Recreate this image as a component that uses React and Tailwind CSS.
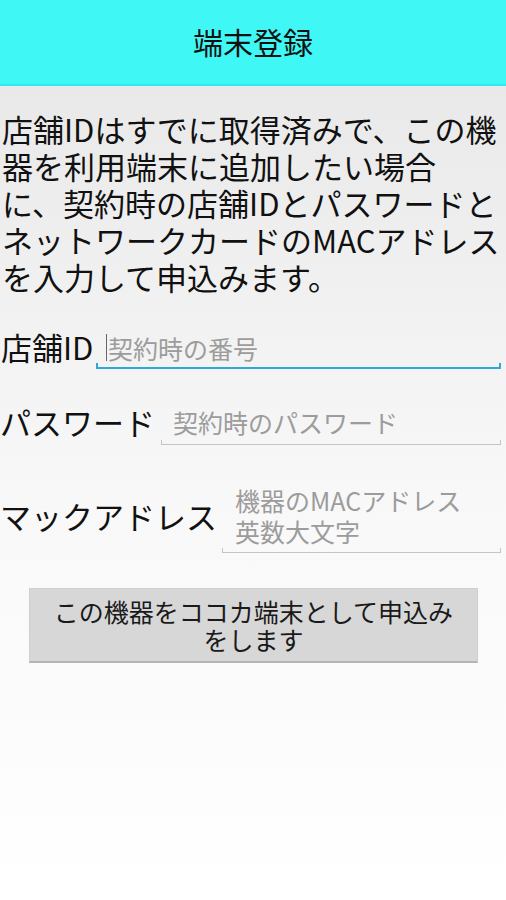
import React from "react";

const font = "font-['Noto_Sans_CJK_JP','Noto_Sans_CJK_SC',sans-serif]";

// Holo style underline with small end ticks
const Underline = ({ active }) => (
  <div
    className={
      active
        ? "h-[6px] border-x-2 border-b-2 border-[#33a6d8]"
        : "h-[5px] border-x border-b border-[#c4c4c4]"
    }
  />
);

const App = () => {
  return (
    <div className={`w-[506px] h-[900px] flex flex-col ${font} text-[#111]`}>
      <header className="h-[86px] shrink-0 flex items-center justify-center bg-[#3ff8f5] border-b-2 border-[#30e8ee]">
        <h1 className="text-[30px] leading-none pb-[2px]">端末登録</h1>
      </header>

      <main className="flex-1 flex flex-col bg-linear-to-b from-[#e9e9e9] via-[#f8f8f8] to-white">
        <p className="pt-[24px] pl-[2px] text-[31px] leading-[37px] whitespace-nowrap">
          店舗IDはすでに取得済みで、この機
          <br />
          器を利用端末に追加したい場合
          <br />
          に、契約時の店舗IDとパスワードと
          <br />
          ネットワークカードのMACアドレス
          <br />
          を入力して申込みます。
        </p>

        {/* 店舗ID */}
        <div className="flex items-start mt-[37px] pr-[5px]">
          <label className="w-[96px] shrink-0 pl-[1px] text-[31px] leading-[30px] whitespace-nowrap">
            店舗ID
          </label>
          <div className="flex-1">
            <div className="flex items-center h-[31px] pl-[10px] text-[25px] leading-[30px] text-[#9c9c9c]">
              <span className="w-px h-[27px] bg-[#666] mr-[1px]" />
              契約時の番号
            </div>
            <Underline active />
          </div>
        </div>

        {/* パスワード */}
        <div className="flex items-start mt-[38px] pr-[5px]">
          <label className="w-[161px] shrink-0 text-[31px] leading-[30px] whitespace-nowrap">
            パスワード
          </label>
          <div className="flex-1">
            <div className="h-[33px] pl-[12px] text-[25px] leading-[30px] text-[#9c9c9c]">
              契約時のパスワード
            </div>
            <Underline />
          </div>
        </div>

        {/* マックアドレス */}
        <div className="flex items-start mt-[40px] pr-[5px]">
          <label className="w-[222px] shrink-0 text-[31px] leading-[62px] whitespace-nowrap">
            マックアドレス
          </label>
          <div className="flex-1">
            <div className="h-[63px] pl-[13px] text-[25px] leading-[31px] text-[#9c9c9c] whitespace-nowrap">
              機器のMACアドレス
              <br />
              英数大文字
            </div>
            <Underline />
          </div>
        </div>

        <div className="pl-[29px] pr-[28px] mt-[35px]">
          <button className="w-full h-[75px] bg-[#d7d7d7] border border-[#cfcfcf] border-b-2 border-b-[#b4b4b4] text-[25px] leading-[28px] text-[#1a1a1a] whitespace-nowrap">
            この機器をココカ端末として申込み
            <br />
            をします
          </button>
        </div>
      </main>
    </div>
  );
};

export default App;
